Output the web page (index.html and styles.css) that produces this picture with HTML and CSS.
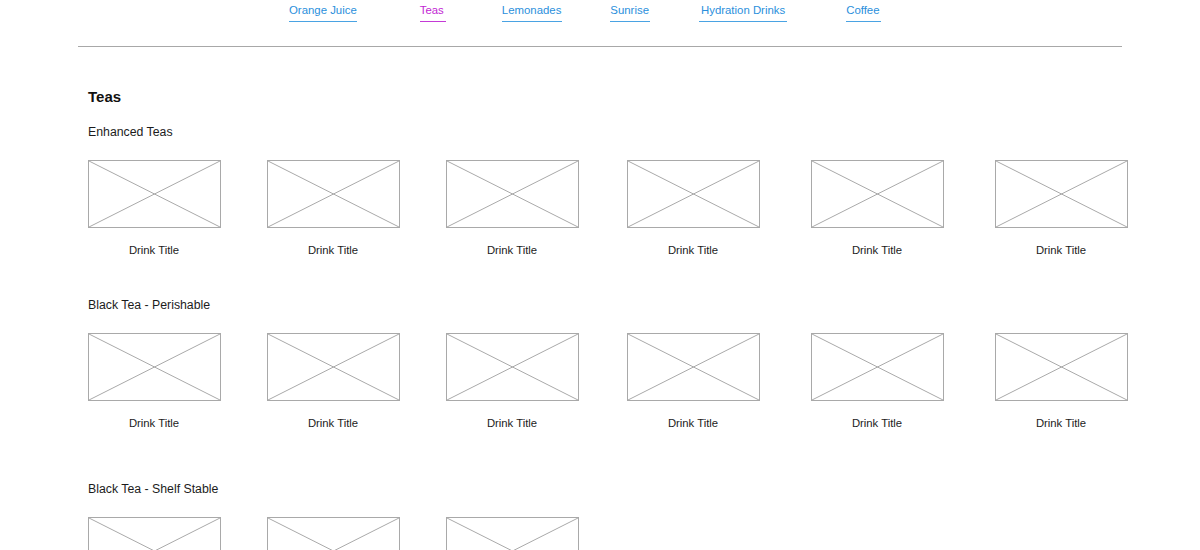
FILE: index.html
```html
<!DOCTYPE html>
<html>
<head>
<meta charset="utf-8">
<link rel="stylesheet" href="styles.css">
</head>
<body>
<header class="top">
  <nav class="nav">
    <a class="nav-link nl-oj">Orange Juice</a>
    <a class="nav-link nl-teas active">Teas</a>
    <a class="nav-link nl-lem">Lemonades</a>
    <a class="nav-link nl-sun">Sunrise</a>
    <a class="nav-link nl-hyd">Hydration Drinks</a>
    <a class="nav-link nl-cof">Coffee</a>
  </nav>
</header>
<hr class="rule">
<main class="main">
  <h1 class="page-title">Teas</h1>

  <section class="section">
    <h2 class="section-title">Enhanced Teas</h2>
    <div class="grid">
      <div class="card"><div class="ph"><svg viewBox="0 0 100 100" preserveAspectRatio="none"><line x1="0" y1="0" x2="100" y2="100"/><line x1="100" y1="0" x2="0" y2="100"/></svg></div><div class="card-title">Drink Title</div></div>
      <div class="card"><div class="ph"><svg viewBox="0 0 100 100" preserveAspectRatio="none"><line x1="0" y1="0" x2="100" y2="100"/><line x1="100" y1="0" x2="0" y2="100"/></svg></div><div class="card-title">Drink Title</div></div>
      <div class="card"><div class="ph"><svg viewBox="0 0 100 100" preserveAspectRatio="none"><line x1="0" y1="0" x2="100" y2="100"/><line x1="100" y1="0" x2="0" y2="100"/></svg></div><div class="card-title">Drink Title</div></div>
      <div class="card"><div class="ph"><svg viewBox="0 0 100 100" preserveAspectRatio="none"><line x1="0" y1="0" x2="100" y2="100"/><line x1="100" y1="0" x2="0" y2="100"/></svg></div><div class="card-title">Drink Title</div></div>
      <div class="card"><div class="ph"><svg viewBox="0 0 100 100" preserveAspectRatio="none"><line x1="0" y1="0" x2="100" y2="100"/><line x1="100" y1="0" x2="0" y2="100"/></svg></div><div class="card-title">Drink Title</div></div>
      <div class="card"><div class="ph"><svg viewBox="0 0 100 100" preserveAspectRatio="none"><line x1="0" y1="0" x2="100" y2="100"/><line x1="100" y1="0" x2="0" y2="100"/></svg></div><div class="card-title">Drink Title</div></div>
    </div>
  </section>

  <section class="section">
    <h2 class="section-title">Black Tea - Perishable</h2>
    <div class="grid">
      <div class="card"><div class="ph"><svg viewBox="0 0 100 100" preserveAspectRatio="none"><line x1="0" y1="0" x2="100" y2="100"/><line x1="100" y1="0" x2="0" y2="100"/></svg></div><div class="card-title">Drink Title</div></div>
      <div class="card"><div class="ph"><svg viewBox="0 0 100 100" preserveAspectRatio="none"><line x1="0" y1="0" x2="100" y2="100"/><line x1="100" y1="0" x2="0" y2="100"/></svg></div><div class="card-title">Drink Title</div></div>
      <div class="card"><div class="ph"><svg viewBox="0 0 100 100" preserveAspectRatio="none"><line x1="0" y1="0" x2="100" y2="100"/><line x1="100" y1="0" x2="0" y2="100"/></svg></div><div class="card-title">Drink Title</div></div>
      <div class="card"><div class="ph"><svg viewBox="0 0 100 100" preserveAspectRatio="none"><line x1="0" y1="0" x2="100" y2="100"/><line x1="100" y1="0" x2="0" y2="100"/></svg></div><div class="card-title">Drink Title</div></div>
      <div class="card"><div class="ph"><svg viewBox="0 0 100 100" preserveAspectRatio="none"><line x1="0" y1="0" x2="100" y2="100"/><line x1="100" y1="0" x2="0" y2="100"/></svg></div><div class="card-title">Drink Title</div></div>
      <div class="card"><div class="ph"><svg viewBox="0 0 100 100" preserveAspectRatio="none"><line x1="0" y1="0" x2="100" y2="100"/><line x1="100" y1="0" x2="0" y2="100"/></svg></div><div class="card-title">Drink Title</div></div>
    </div>
  </section>

  <section class="section section-wide">
    <h2 class="section-title">Black Tea - Shelf Stable</h2>
    <div class="grid">
      <div class="card"><div class="ph"><svg viewBox="0 0 100 100" preserveAspectRatio="none"><line x1="0" y1="0" x2="100" y2="100"/><line x1="100" y1="0" x2="0" y2="100"/></svg></div><div class="card-title">Drink Title</div></div>
      <div class="card"><div class="ph"><svg viewBox="0 0 100 100" preserveAspectRatio="none"><line x1="0" y1="0" x2="100" y2="100"/><line x1="100" y1="0" x2="0" y2="100"/></svg></div><div class="card-title">Drink Title</div></div>
      <div class="card"><div class="ph"><svg viewBox="0 0 100 100" preserveAspectRatio="none"><line x1="0" y1="0" x2="100" y2="100"/><line x1="100" y1="0" x2="0" y2="100"/></svg></div><div class="card-title">Drink Title</div></div>
    </div>
  </section>
</main>
</body>
</html>
```
FILE: styles.css
```css
html, body {
  margin: 0;
  padding: 0;
  background: #ffffff;
  font-family: "Liberation Sans", Arial, sans-serif;
  color: #1c1c1c;
  overflow: hidden;
}

.top {
  height: 46px;
}

.nav {
  display: flex;
  align-items: flex-start;
  padding: 3px 0 0 289px;
}

.nav-link {
  display: block;
  font-size: 11.4px;
  line-height: 14px;
  color: #2a8fdc;
  padding-bottom: 4px;
  border-bottom: 1px solid #4aa3e3;
  cursor: pointer;
}

.nav-link.active {
  color: #c21fd3;
  border-bottom-color: #c43ad6;
}

.nl-teas { margin-left: 63px; padding-right: 2px; }
.nl-lem { margin-left: 56px; padding-right: 1px; }
.nl-sun { margin-left: 48px; padding-right: 1px; }
.nl-hyd { margin-left: 49px; padding-left: 2px; padding-right: 2px; }
.nl-cof { margin-left: 59px; padding-right: 1px; }

.rule {
  margin: 0 78px;
  border: 0;
  border-top: 1px solid #a8a8a8;
  height: 0;
}

.main {
  padding: 41px 0 0 88px;
}

.page-title {
  margin: 0;
  font-size: 15px;
  line-height: 18px;
  font-weight: bold;
  color: #111;
}

.section {
  margin-top: 19px;
}

.section + .section {
  margin-top: 41px;
}

.section + .section-wide {
  margin-top: 52px;
}

.section-title {
  margin: 0 0 20px 0;
  font-size: 12.3px;
  line-height: 15px;
  font-weight: normal;
  color: #1c1c1c;
}

.grid {
  display: grid;
  grid-template-columns: 179px 179px 181px 184px 184px 132px;
}

.card {
  width: 132px;
}

.ph {
  box-sizing: border-box;
  width: 133px;
  height: 68px;
  border: 1px solid #a9a9a9;
  overflow: hidden;
}

.ph svg {
  display: block;
  width: 100%;
  height: 100%;
}

.ph line {
  stroke: #a9a9a9;
  stroke-width: 1;
  vector-effect: non-scaling-stroke;
}

.card-title {
  margin-top: 15px;
  font-size: 11.3px;
  line-height: 14px;
  text-align: center;
  color: #1c1c1c;
}
```
